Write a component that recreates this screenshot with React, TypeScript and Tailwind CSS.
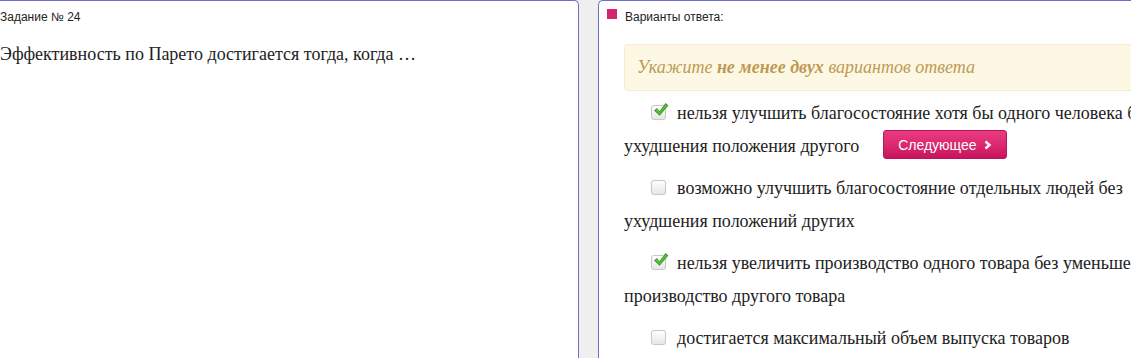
import React from "react";

interface Option {
    text: string;
    checked: boolean;
    withNext?: boolean;
}

const options: Option[] = [
    { text: "нельзя улучшить благосостояние хотя бы одного человека без ухудшения положения другого", checked: true, withNext: true },
    { text: "возможно улучшить благосостояние отдельных людей без ухудшения положений других", checked: false },
    { text: "нельзя увеличить производство одного товара без уменьшения производство другого товара", checked: true },
    { text: "достигается максимальный объем выпуска товаров", checked: false },
];

const CheckBox = ({ checked }: { checked: boolean }) => (
    <span className="relative inline-block w-[15px] h-[15px] mr-[11px] align-[-1px] rounded-[3px] border border-[#c8c8c8] bg-gradient-to-b from-[#ffffff] to-[#e6e6e6] shadow-[0_0_1px_rgba(0,0,0,0.15)] indent-0">
        {checked && (
            <svg className="absolute left-[1px] top-[-4px]" width="16" height="16" viewBox="0 0 16 16">
                <path d="M1 8.6 L4 6 L6.4 9.2 L12.6 1 L15.4 3.4 L6.6 13.8 Z" fill="#3c9a28" />
                <path d="M2.4 8.6 L4 7.3 L6.5 10.5 L12.8 2.4 L14 3.5 L6.6 12.3 Z" fill="#5ec53a" />
            </svg>
        )}
    </span>
);

export default function App() {
    return (
        <div className="w-[1131px] h-[358px] overflow-hidden bg-[#efefef] flex items-stretch">
            {/* Question */}
            <div className="w-[579px] shrink-0 bg-white border-t border-r border-[#6b6fc8] rounded-tr-[5px]">
                <div className="pt-[9px] text-[12px] leading-[14px] text-[#222] font-['Liberation_Sans',Arial,sans-serif]">
                    Задание № 24
                </div>
                <div className="mt-[20px] text-[18px] leading-[21px] text-[#222] font-['Liberation_Serif','Times_New_Roman',serif]">
                    Эффективность по Парето достигается тогда, когда …
                </div>
            </div>

            <div className="w-[19px] shrink-0" />

            {/* Answers */}
            <div className="w-[620px] shrink-0 bg-white border-t border-l border-[#6b6fc8] rounded-tl-[5px] pl-[25px]">
                <div className="flex items-center h-[28px] ml-[-17px] pt-[1px]">
                    <span className="w-[10px] h-[10px] bg-[#d6246e] mr-[8px] mt-[-4px]" />
                    <span className="text-[12px] text-[#222] font-['Liberation_Sans',Arial,sans-serif] mt-[3px]">Варианты ответа:</span>
                </div>

                <div className="mt-[15px] h-[47px] rounded-[4px] border border-[#faebcc] bg-[#fcf8e3] pl-[12px] flex items-center font-['Liberation_Serif','Times_New_Roman',serif] italic text-[18px] text-[#c09853]">
                    <span>
                        Укажите <b>не менее двух</b> вариантов ответа
                    </span>
                </div>

                <div className="mt-[6px] w-[566px] font-['Liberation_Serif','Times_New_Roman',serif] text-[18px] leading-[33px] text-[#222]">
                    {options.map((o, i) => (
                        <div key={i} className="indent-[27px] mb-[9px]">
                            <CheckBox checked={o.checked} />
                            {o.text}
                            {o.withNext && (
                                <span className="inline-flex items-center indent-0 ml-[24px] align-top h-[29px] px-[14px] rounded-[3px] border border-[#b8145a] bg-gradient-to-b from-[#ec3a83] to-[#c8145d] text-white text-[14px] font-['Liberation_Sans',Arial,sans-serif] leading-none">
                                    Следующее
                                    <svg className="ml-[7px]" width="8" height="10" viewBox="0 0 8 10">
                                        <path d="M1.5 1.5 L5.5 5 L1.5 8.5" stroke="#fff" strokeWidth="2.4" fill="none" />
                                    </svg>
                                </span>
                            )}
                        </div>
                    ))}
                </div>
            </div>
        </div>
    );
}
